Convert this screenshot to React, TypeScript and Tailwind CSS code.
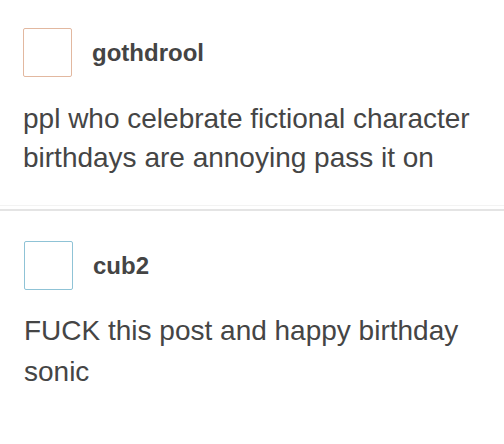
import React from "react";

const font = { fontFamily: '"Liberation Sans", Arial, sans-serif' };

function Post({
  name,
  text,
  border,
  gap,
}: {
  name: string;
  text: React.ReactNode;
  border: string;
  gap: string;
}) {
  return (
    <div className="flex flex-col">
      <div className="flex items-center gap-[20px]">
        <div className={`w-[49px] h-[49px] rounded-[2px] border ${border} bg-white`} />
        <div className="text-[24px] font-bold text-[#444444] leading-none">{name}</div>
      </div>
      <div className={gap}>{text}</div>
    </div>
  );
}

export default function App() {
  return (
    <div className="w-[504px] h-[444px] bg-white overflow-hidden" style={font}>
      <div className="pl-[23px] pt-[28px] pb-[28px]">
        <Post
          name="gothdrool"
          border="border-[#e2b8a0]"
          gap="mt-[22px]"
          text={
            <p className="text-[28px] leading-[39px] text-[#454545]">
              ppl who celebrate fictional character
              <br />
              birthdays are annoying pass it on
            </p>
          }
        />
      </div>
      <div className="h-[1px] bg-[#f3f3f3]" />
      <div className="h-[3px] bg-white" />
      <div className="h-[2px] bg-[#e4e4e4]" />
      <div className="pl-[24px] pt-[30px]">
        <Post
          name="cub2"
          border="border-[#8fc3d6]"
          gap="mt-[20px]"
          text={
            <p className="text-[28px] leading-[41px] text-[#454545]">
              FUCK this post and happy birthday
              <br />
              sonic
            </p>
          }
        />
      </div>
    </div>
  );
}
